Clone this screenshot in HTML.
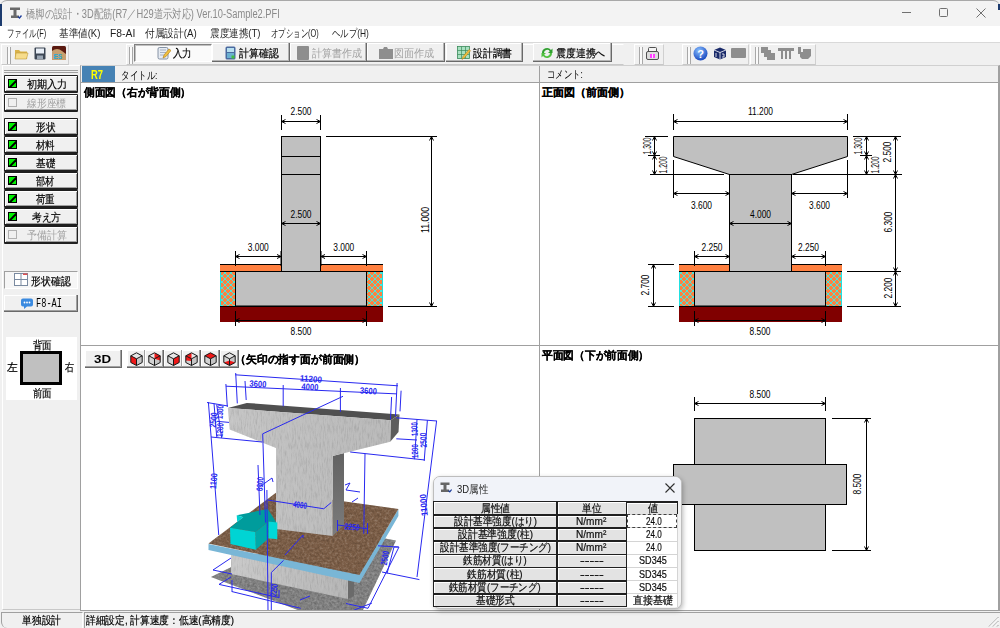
<!DOCTYPE html>
<html><head><meta charset="utf-8">
<style>
*{box-sizing:border-box;margin:0;padding:0}
html,body{width:1000px;height:628px;overflow:hidden;background:#f0f0f0;font-family:"Liberation Sans",sans-serif;font-size:12px;color:#000;position:relative}
.a{position:absolute}
.f{position:absolute;white-space:nowrap;line-height:1;display:inline-block;transform-origin:0 0;font-size:11px}
#title{left:0;top:0;width:1000px;height:26px;background:#f3f3f3;border-top:1px solid #a8a8a8;border-radius:7px 7px 0 0}
#menu{left:0;top:26px;width:1000px;height:16px;background:#fff}
#tb{left:0;top:42px;width:1000px;height:22px;background:#f0f0f0;border-top:1px solid #d9d9d9}
.grp{position:absolute;top:1px;height:21px;border-left:1px solid #fff;border-top:1px solid #fff;border-right:1px solid #d0d0d0;border-bottom:1px solid #c8c8c8}
.grip{position:absolute;top:2px;width:4px;height:17px;border-left:1px solid #a8a8a8;border-right:1px solid #a8a8a8;background:#fafafa}
.btn{position:absolute;top:1px;height:19px;background:#f0f0f0;border-right:1px solid #696969;border-bottom:1px solid #696969;box-shadow:inset -1px -1px 0 #b4b4b4, inset 1px 1px 0 #fff}
.lbtn{position:absolute;left:4px;width:74px;height:18px;background:#f0f0f0;border:1px solid #202020;border-bottom:2px solid #202020;box-shadow:inset 1px 1px 0 #fff, inset -1px -1px 0 #a0a0a0;border-radius:1px}
.ck{position:absolute;left:3px;top:3px;width:9px;height:9px;background:#00f000;border:1px solid #000;overflow:hidden}
.ck:after{content:"";position:absolute;left:-1px;top:3px;width:10px;height:1.5px;background:#000;transform:rotate(-45deg)}
.dis .ck{background:transparent;border-color:#b0b0b0}
.dis .ck:after{display:none}
.bt{color:#000}
.k{-webkit-text-stroke:0.2px #000}
</style></head><body>
<!-- title bar -->
<div id="title" class="a"></div>
<svg class="a" style="left:9px;top:7px" width="13" height="12" viewBox="0 0 13 12"><path d="M1 0.5h10v2.5H7.5v5.5h2.5v2.5H2v-2.5h2.5V3H1z" fill="#6a6a6a"/><path d="M9 9.5l1.5 1.5 2-2.5" stroke="#1a3a9a" fill="none" stroke-width="1.3"/></svg>
<span class="f" style="left:26.0px;top:8px;font-size:12px;color:#8a8a8a;--w:253.8px;--h:10px">橋脚の設計・3D配筋(R7／H29道示対応) Ver.10-Sample2.PFI</span>
<div class="a" style="left:902px;top:12px;width:9px;height:1px;background:#707070"></div>
<div class="a" style="left:939px;top:8px;width:9px;height:9px;border:1px solid #707070;border-radius:1.5px"></div>
<svg class="a" style="left:976px;top:8px" width="10" height="10" viewBox="0 0 10 10"><path d="M0.5 0.5l9 9M9.5 0.5l-9 9" stroke="#707070" stroke-width="1"/></svg>
<div class="a" style="left:0;top:4px;width:2px;height:22px;background:#1c3b6e"></div>
<div class="a" style="left:998px;top:4px;width:2px;height:6px;background:#1c3b6e"></div>
<!-- menu -->
<div id="menu" class="a"></div>
<span class="f" style="left:6.6px;top:28px;color:#1e1e1e;--w:39.2px">ファイル(F)</span>
<span class="f" style="left:58.6px;top:28px;color:#1e1e1e;--w:41.4px">基準値(K)</span>
<span class="f" style="left:109.7px;top:28px;color:#1e1e1e;--w:25.3px">F8-AI</span>
<span class="f" style="left:145.2px;top:28px;color:#1e1e1e;--w:51.8px">付属設計(A)</span>
<span class="f" style="left:209.8px;top:28px;color:#1e1e1e;--w:50.4px">震度連携(T)</span>
<span class="f" style="left:271.4px;top:28px;color:#1e1e1e;--w:47.8px">オプション(O)</span>
<span class="f" style="left:332.0px;top:28px;color:#1e1e1e;--w:36.8px">ヘルプ(H)</span>
<!-- toolbar -->
<div id="tb" class="a">
  <div class="grp" style="left:1px;width:68px"><div class="grip" style="left:5px"></div></div>
  <div class="grp" style="left:126px;width:498px;border-right-color:#f0f0f0"><div class="grip" style="left:2px"></div></div>
  <div class="grp" style="left:634px;width:30px"><div class="grip" style="left:4px"></div></div>
  <div class="grp" style="left:682px;width:67px"><div class="grip" style="left:4px"></div></div>
  <div class="grp" style="left:750px;width:66px"><div class="grip" style="left:4px"></div></div>
</div>
<!-- toolbar buttons -->
<svg class="a" style="left:14px;top:47px" width="15" height="13" viewBox="0 0 15 13"><path d="M1 3h4l1.5 1.5H13v7.5H1z" fill="#d9b24a"/><path d="M2 6h12l-1.5 6H1z" fill="#f6dc8c" stroke="#c09a3a" stroke-width="0.6"/></svg>
<svg class="a" style="left:34px;top:47px" width="12" height="13" viewBox="0 0 12 13"><rect x="0.5" y="0.5" width="11" height="12" rx="1" fill="#3c4654"/><rect x="2" y="1.5" width="8" height="5" fill="#e8eef6"/><rect x="3" y="8.5" width="6" height="3.5" fill="#9aa6b4"/></svg>
<svg class="a" style="left:52px;top:46px" width="14" height="14" viewBox="0 0 14 14"><rect width="14" height="14" rx="1.5" fill="#5a1a10"/><path d="M0 14V5q5-4 10 0l4 3v6z" fill="#c8a070"/><text x="1.5" y="12.5" font-size="6.5" font-weight="bold" fill="#20a8d8" font-family="Liberation Sans">ES</text></svg>
<div class="a" style="left:134px;top:44px;width:78px;height:18px;background:#fafafa;border-top:1px solid #808080;border-left:1px solid #808080;border-right:1px solid #fff;border-bottom:1px solid #fff;box-shadow:inset 1px 1px 0 #c0c0c0"></div>
<svg class="a" style="left:157px;top:46px" width="14" height="14" viewBox="0 0 14 14"><rect x="1" y="1.5" width="10" height="11.5" rx="1.5" fill="#e6ebf2" stroke="#6a7a90" stroke-width="0.8"/><path d="M3 4h6M3 6.5h6M3 9h4" stroke="#8a9ab0" stroke-width="0.7"/><path d="M6 12l1-3 5-6 2 1.5-5 6z" fill="#f0c040" stroke="#b07a10" stroke-width="0.6"/></svg>
<span class="f bt k" style="left:173.0px;top:48px;--w:18.9px">入力</span>
<div class="btn" style="left:212px;top:43px;width:78px;height:19px"></div>
<svg class="a" style="left:225px;top:46px" width="11" height="14" viewBox="0 0 11 14"><rect x="0.5" y="0.5" width="10" height="13" rx="1.5" fill="#4a6aa0"/><rect x="2" y="2" width="7" height="4" fill="#b8e0f0"/><rect x="2" y="7" width="7" height="5" fill="#6ab0d0"/><rect x="6.5" y="9.5" width="3" height="3" fill="#40c040"/></svg>
<span class="f bt k" style="left:239.4px;top:48px;--w:39.6px">計算確認</span>
<div class="btn" style="left:290px;top:43px;width:77px;height:19px"></div>
<div class="a" style="left:297px;top:46px;width:12px;height:14px;background:#8e8e8e;border-radius:1px"></div>
<span class="f" style="left:312.2px;top:48px;color:#a0a0a0;--w:50.0px">計算書作成</span>
<div class="btn" style="left:367px;top:43px;width:78px;height:19px"></div>
<svg class="a" style="left:379px;top:47px" width="14" height="12" viewBox="0 0 14 12"><path d="M0 2h4l1-2h3l1 2h5v10H0z" fill="#8e8e8e"/></svg>
<span class="f" style="left:393.9px;top:48px;color:#a0a0a0;--w:40.3px">図面作成</span>
<div class="btn" style="left:446px;top:43px;width:77px;height:19px"></div>
<svg class="a" style="left:457px;top:46px" width="14" height="14" viewBox="0 0 14 14"><rect x="0.5" y="0.5" width="12" height="12" fill="#a8e0c0" stroke="#3a8a5a" stroke-width="0.8"/><path d="M4.5 0.5v12M8.5 0.5v12M0.5 4.5h12M0.5 8.5h12" stroke="#3a8a5a" stroke-width="0.7"/><path d="M5 13.5l1-3 6-7 1.5 1.2-6 7z" fill="#f0c040" stroke="#b07a10" stroke-width="0.5"/></svg>
<span class="f bt k" style="left:473.0px;top:48px;--w:39.0px">設計調書</span>
<div class="btn" style="left:533px;top:43px;width:79px;height:19px"></div>
<svg class="a" style="left:540px;top:46px" width="14" height="14" viewBox="0 0 14 14"><path d="M2 7a5 5 0 0 1 9-3l1.5-1.5V7H8l1.8-1.8A3.2 3.2 0 0 0 4 7z" fill="#30a030"/><path d="M12 7a5 5 0 0 1-9 3l-1.5 1.5V7H6l-1.8 1.8A3.2 3.2 0 0 0 10 7z" fill="#50c040"/></svg>
<span class="f k" style="left:555.8px;top:48px;--w:49.2px">震度連携へ</span>
<svg class="a" style="left:646px;top:47px" width="13" height="13" viewBox="0 0 13 13"><rect x="2.5" y="0.5" width="8" height="5" rx="1" fill="#f4f4f4" stroke="#505050"/><rect x="0.5" y="4.5" width="12" height="8" rx="1.5" fill="#dcdcdc" stroke="#505050"/><rect x="4" y="7" width="5" height="4" fill="#ff40ff"/><path d="M6.5 7v4" stroke="#fff" stroke-width="0.8"/></svg>
<svg class="a" style="left:693px;top:46px" width="15" height="15" viewBox="0 0 15 15"><defs><radialGradient id="hg" cx="0.4" cy="0.3" r="0.7"><stop offset="0" stop-color="#8ac0ff"/><stop offset="1" stop-color="#1a4ac0"/></radialGradient></defs><circle cx="7.5" cy="7.5" r="7" fill="url(#hg)"/><text x="7.5" y="11.8" text-anchor="middle" font-size="11" font-weight="bold" fill="#fff" font-family="Liberation Sans">?</text></svg>
<svg class="a" style="left:713px;top:47px" width="14" height="13" viewBox="0 0 14 13"><path d="M1 3l6-2.5 6 2.5v7l-6 2.5-6-2.5z" fill="#1a2a6a"/><path d="M1 3l6 2.5 6-2.5M7 5.5v7" stroke="#fff" stroke-width="0.8" fill="none"/><path d="M3 6v4M9 7h2v3h-2" stroke="#fff" stroke-width="0.8" fill="none"/></svg>
<div class="a" style="left:731px;top:48px;width:15px;height:10px;background:#8e8e8e;border-radius:1px"></div>
<svg class="a" style="left:760px;top:47px" width="15" height="13" viewBox="0 0 15 13"><path d="M1 0h7v3h3v3h4v7H7v-3H4V6H1z" fill="#8e8e8e"/></svg>
<svg class="a" style="left:778px;top:48px" width="16" height="11" viewBox="0 0 16 11"><path d="M0 0h16v3h-3v8h-2V3H9v8H7V3H5v8H3V3H0z" fill="#8e8e8e"/></svg>
<svg class="a" style="left:797px;top:46px" width="15" height="14" viewBox="0 0 15 14"><path d="M1 1h3v5h2V3h8v7l-3 3H5L3 11V8H1z" fill="#8e8e8e"/></svg>
<!-- left panel -->
<div class="a" style="left:2px;top:65px;width:79px;height:545px;border-left:1px solid #fff;border-top:1px solid #fff;border-right:1px solid #c8c8c8;border-bottom:1px solid #c8c8c8"></div>
<div class="a" style="left:4px;top:70px;width:74px;height:1px;background:#a0a0a0"></div>
<div class="a" style="left:4px;top:72px;width:74px;height:1px;background:#a0a0a0"></div>
<div class="lbtn" style="top:75px"><div class="ck"></div></div>
<span class="f k" style="left:26.6px;top:79px;--w:40.6px">初期入力</span>
<div class="lbtn dis" style="top:94px"><div class="ck"></div></div>
<span class="f" style="left:26.9px;top:98px;color:#a0a0a0;--w:39.1px">線形座標</span>
<div class="lbtn" style="top:118px"><div class="ck"></div></div>
<span class="f k" style="left:36.4px;top:122px;--w:19.4px">形状</span>
<div class="lbtn" style="top:136px"><div class="ck"></div></div>
<span class="f k" style="left:36.4px;top:140px;--w:18.9px">材料</span>
<div class="lbtn" style="top:154px"><div class="ck"></div></div>
<span class="f k" style="left:36.4px;top:158px;--w:19.4px">基礎</span>
<div class="lbtn" style="top:172px"><div class="ck"></div></div>
<span class="f k" style="left:36.4px;top:176px;--w:18.4px">部材</span>
<div class="lbtn" style="top:190px"><div class="ck"></div></div>
<span class="f k" style="left:36.4px;top:194px;--w:18.9px">荷重</span>
<div class="lbtn" style="top:208px"><div class="ck"></div></div>
<span class="f k" style="left:31.8px;top:212px;--w:29.0px">考え方</span>
<div class="lbtn dis" style="top:226px"><div class="ck"></div></div>
<span class="f" style="left:26.9px;top:230px;color:#a0a0a0;--w:39.9px">予備計算</span>
<!-- left lower -->
<div class="a" style="left:4px;top:271px;width:74px;height:18px;background:#f6f6f6;border-top:1px solid #a0a0a0;border-left:1px solid #a0a0a0;border-right:1px solid #fff;border-bottom:1px solid #fff"></div>
<svg class="a" style="left:14px;top:273px" width="14" height="13" viewBox="0 0 14 13"><rect x="0.5" y="0.5" width="13" height="12" fill="#fff" stroke="#7a8aa0"/><path d="M7 0.5v12M0.5 6.5h13" stroke="#7a8aa0"/><rect x="9" y="0.5" width="4.5" height="1.5" fill="#e05050"/></svg>
<span class="f k" style="left:30.6px;top:276px;--w:39.8px">形状確認</span>
<div class="a" style="left:4px;top:295px;width:74px;height:17px;background:#f0f0f0;border-right:1px solid #696969;border-bottom:1px solid #696969;box-shadow:inset -1px -1px 0 #a0a0a0, inset 1px 1px 0 #fff"></div>
<svg class="a" style="left:21px;top:298px" width="12" height="11" viewBox="0 0 12 11"><path d="M2 0.5h8a2 2 0 0 1 2 2v4a2 2 0 0 1-2 2H6l-3 2.5V8.5H2a2 2 0 0 1-2-2v-4a2 2 0 0 1 2-2z" fill="#3a8ae0"/><circle cx="3.5" cy="4.5" r="0.9" fill="#fff"/><circle cx="6" cy="4.5" r="0.9" fill="#fff"/><circle cx="8.5" cy="4.5" r="0.9" fill="#fff"/></svg>
<span class="f" style="left:36.2px;top:298px;--w:26.0px;font-family:'Liberation Mono',monospace;font-size:12px">F8-AI</span>
<div class="a" style="left:6px;top:337px;width:71px;height:63px;background:#fff"></div>
<div class="a" style="left:20px;top:351px;width:42px;height:34px;background:#c0c0c0;border:3px solid #000"></div>
<span class="f k" style="left:32.6px;top:340px;--w:18.9px">背面</span>
<span class="f k" style="left:32.6px;top:388px;--w:18.9px">前面</span>
<span class="f k" style="left:7.4px;top:362px;--w:10.8px">左</span>
<span class="f k" style="left:65.0px;top:362px;--w:9.0px">右</span>
<!-- main frame -->
<div class="a" style="left:80px;top:65px;width:920px;height:546px;background:#fff;border-left:1px solid #a0a0a0;border-top:1px solid #d0d0d0;border-right:2px solid #a0a0a0;border-bottom:1px solid #a0a0a0"></div>
<div class="a" style="left:81px;top:66px;width:917px;height:17px;background:#f0f0f0;border-bottom:1px solid #a0a0a0"></div>
<div class="a" style="left:539px;top:66px;width:1px;height:545px;background:#a0a0a0"></div>
<div class="a" style="left:81px;top:345px;width:917px;height:1px;background:#a0a0a0"></div>
<div class="a" style="left:82px;top:66px;width:33px;height:16px;background:#4682b4"></div>
<span class="f" style="left:91px;top:69px;color:#ffff00;font-weight:bold;--w:12px;font-size:12px">R7</span>
<span class="f" style="left:120.5px;top:70px;--w:36.5px">タイトル:</span>
<span class="f" style="left:546.8px;top:69px;--w:35.7px">コメント:</span>
<span class="f k" style="left:84px;top:87px;font-weight:bold;--w:107px">側面図（右が背面側）</span>
<span class="f k" style="left:542px;top:87px;font-weight:bold;--w:88px">正面図（前面側）</span>
<span class="f k" style="left:542px;top:350px;font-weight:bold;--w:107px">平面図（下が前面側）</span>
<!--DRAW--><svg class="a" style="left:0;top:0" width="1000" height="628" viewBox="0 0 1000 628" font-family="Liberation Sans"><defs><pattern id="hx" patternUnits="userSpaceOnUse" width="6" height="6"><rect width="6" height="6" fill="#ff8040"/><path d="M-1 -1L7 7M7 -1L-1 7" stroke="#38f0e8" stroke-width="0.9"/></pattern></defs><rect x="220" y="264" width="163" height="7.2" fill="#ff8040"/><line x1="220" y1="264.5" x2="281" y2="264.5" stroke="#000" stroke-width="1"/><line x1="321" y1="264.5" x2="383" y2="264.5" stroke="#000" stroke-width="1"/><rect x="220" y="271.5" width="15.5" height="34.5" fill="url(#hx)"/><rect x="366.5" y="271.5" width="16.5" height="34.5" fill="url(#hx)"/><line x1="220.5" y1="271.5" x2="220.5" y2="306" stroke="#20e0e0" stroke-width="1"/><line x1="382.5" y1="271.5" x2="382.5" y2="306" stroke="#20e0e0" stroke-width="1"/><rect x="235.5" y="271.5" width="131.0" height="34.5" fill="#c0c0c0" stroke="#000" stroke-width="1"/><line x1="220" y1="271.5" x2="383" y2="271.5" stroke="#000" stroke-width="1"/><rect x="220" y="306" width="163" height="16" fill="#800000"/><line x1="220" y1="306.5" x2="383" y2="306.5" stroke="#000" stroke-width="1"/><rect x="281.5" y="136.5" width="39" height="135" fill="#c0c0c0" stroke="#000" stroke-width="1"/><line x1="281" y1="156.5" x2="321" y2="156.5" stroke="#000" stroke-width="1"/><line x1="281" y1="174.5" x2="321" y2="174.5" stroke="#000" stroke-width="1"/><line x1="281.5" y1="121.5" x2="320.5" y2="121.5" stroke="#000" stroke-width="1"/><line x1="281.5" y1="115" x2="281.5" y2="130" stroke="#000" stroke-width="1"/><line x1="320.5" y1="115" x2="320.5" y2="130" stroke="#000" stroke-width="1"/><path d="M285.5 119.5L281.5 121.5L285.5 123.5" stroke="#000" fill="none" stroke-width="1"/><path d="M316.5 119.5L320.5 121.5L316.5 123.5" stroke="#000" fill="none" stroke-width="1"/><text x="301.0" y="114.5" font-size="11.5" fill="#000" text-anchor="middle" textLength="21" lengthAdjust="spacingAndGlyphs">2.500</text><line x1="281.5" y1="223.5" x2="320.5" y2="223.5" stroke="#000" stroke-width="1"/><path d="M285.5 221.5L281.5 223.5L285.5 225.5" stroke="#000" fill="none" stroke-width="1"/><path d="M316.5 221.5L320.5 223.5L316.5 225.5" stroke="#000" fill="none" stroke-width="1"/><text x="301.0" y="217.5" font-size="11.5" fill="#000" text-anchor="middle" textLength="21" lengthAdjust="spacingAndGlyphs">2.500</text><line x1="235.5" y1="256.5" x2="281" y2="256.5" stroke="#000" stroke-width="1"/><line x1="235.5" y1="251" x2="235.5" y2="266" stroke="#000" stroke-width="1"/><line x1="281" y1="251" x2="281" y2="266" stroke="#000" stroke-width="1"/><path d="M239.5 254.5L235.5 256.5L239.5 258.5" stroke="#000" fill="none" stroke-width="1"/><path d="M277 254.5L281 256.5L277 258.5" stroke="#000" fill="none" stroke-width="1"/><text x="258.25" y="250.5" font-size="11.5" fill="#000" text-anchor="middle" textLength="21" lengthAdjust="spacingAndGlyphs">3.000</text><line x1="321" y1="256.5" x2="366.5" y2="256.5" stroke="#000" stroke-width="1"/><line x1="321" y1="251" x2="321" y2="266" stroke="#000" stroke-width="1"/><line x1="366.5" y1="251" x2="366.5" y2="266" stroke="#000" stroke-width="1"/><path d="M325 254.5L321 256.5L325 258.5" stroke="#000" fill="none" stroke-width="1"/><path d="M362.5 254.5L366.5 256.5L362.5 258.5" stroke="#000" fill="none" stroke-width="1"/><text x="343.75" y="250.5" font-size="11.5" fill="#000" text-anchor="middle" textLength="21" lengthAdjust="spacingAndGlyphs">3.000</text><line x1="235.5" y1="320.5" x2="366.5" y2="320.5" stroke="#000" stroke-width="1"/><line x1="235.5" y1="311" x2="235.5" y2="326" stroke="#000" stroke-width="1"/><line x1="366.5" y1="311" x2="366.5" y2="326" stroke="#000" stroke-width="1"/><path d="M239.5 318.5L235.5 320.5L239.5 322.5" stroke="#000" fill="none" stroke-width="1"/><path d="M362.5 318.5L366.5 320.5L362.5 322.5" stroke="#000" fill="none" stroke-width="1"/><text x="301.0" y="334.5" font-size="11.5" fill="#000" text-anchor="middle" textLength="21" lengthAdjust="spacingAndGlyphs">8.500</text><line x1="326" y1="136.5" x2="437" y2="136.5" stroke="#000" stroke-width="1"/><line x1="388" y1="306.5" x2="437" y2="306.5" stroke="#000" stroke-width="1"/><line x1="431.5" y1="136.5" x2="431.5" y2="306.5" stroke="#000" stroke-width="1"/><path d="M429.5 140.5L431.5 136.5L433.5 140.5" stroke="#000" fill="none" stroke-width="1"/><path d="M429.5 302.5L431.5 306.5L433.5 302.5" stroke="#000" fill="none" stroke-width="1"/><text transform="translate(424.5,220) rotate(-90)" x="0" y="4.2" font-size="11.5" text-anchor="middle" textLength="26" lengthAdjust="spacingAndGlyphs">11.000</text><rect x="679" y="264" width="163" height="7.2" fill="#ff8040"/><line x1="679" y1="264.5" x2="729" y2="264.5" stroke="#000" stroke-width="1"/><line x1="792" y1="264.5" x2="842" y2="264.5" stroke="#000" stroke-width="1"/><rect x="679" y="271.5" width="15.5" height="34.5" fill="url(#hx)"/><rect x="825.5" y="271.5" width="16.5" height="34.5" fill="url(#hx)"/><line x1="679.5" y1="271.5" x2="679.5" y2="306" stroke="#20e0e0" stroke-width="1"/><line x1="841.5" y1="271.5" x2="841.5" y2="306" stroke="#20e0e0" stroke-width="1"/><rect x="694.5" y="271.5" width="131.0" height="34.5" fill="#c0c0c0" stroke="#000" stroke-width="1"/><line x1="679" y1="271.5" x2="842" y2="271.5" stroke="#000" stroke-width="1"/><rect x="679" y="306" width="163" height="16" fill="#800000"/><line x1="679" y1="306.5" x2="842" y2="306.5" stroke="#000" stroke-width="1"/><path d="M673.5 136.5H847.5V156.5L791.5 174.5H729.5L673.5 156.5Z" fill="#c0c0c0" stroke="#000"/><rect x="729.5" y="174.5" width="62" height="97" fill="#c0c0c0" stroke="#000" stroke-width="1"/><line x1="673.5" y1="121.5" x2="847.5" y2="121.5" stroke="#000" stroke-width="1"/><line x1="673.5" y1="114" x2="673.5" y2="130" stroke="#000" stroke-width="1"/><line x1="847.5" y1="114" x2="847.5" y2="130" stroke="#000" stroke-width="1"/><path d="M677.5 119.5L673.5 121.5L677.5 123.5" stroke="#000" fill="none" stroke-width="1"/><path d="M843.5 119.5L847.5 121.5L843.5 123.5" stroke="#000" fill="none" stroke-width="1"/><text x="760.5" y="114.5" font-size="11.5" fill="#000" text-anchor="middle" textLength="25" lengthAdjust="spacingAndGlyphs">11.200</text><line x1="673.5" y1="193.5" x2="729.5" y2="193.5" stroke="#000" stroke-width="1"/><path d="M677.5 191.5L673.5 193.5L677.5 195.5" stroke="#000" fill="none" stroke-width="1"/><path d="M725.5 191.5L729.5 193.5L725.5 195.5" stroke="#000" fill="none" stroke-width="1"/><text x="701.5" y="208.5" font-size="11.5" fill="#000" text-anchor="middle" textLength="21" lengthAdjust="spacingAndGlyphs">3.600</text><line x1="673.5" y1="160" x2="673.5" y2="198" stroke="#000" stroke-width="1"/><line x1="791.5" y1="193.5" x2="847.5" y2="193.5" stroke="#000" stroke-width="1"/><path d="M795.5 191.5L791.5 193.5L795.5 195.5" stroke="#000" fill="none" stroke-width="1"/><path d="M843.5 191.5L847.5 193.5L843.5 195.5" stroke="#000" fill="none" stroke-width="1"/><text x="819.5" y="208.5" font-size="11.5" fill="#000" text-anchor="middle" textLength="21" lengthAdjust="spacingAndGlyphs">3.600</text><line x1="847.5" y1="160" x2="847.5" y2="198" stroke="#000" stroke-width="1"/><line x1="729.5" y1="223.5" x2="791.5" y2="223.5" stroke="#000" stroke-width="1"/><path d="M733.5 221.5L729.5 223.5L733.5 225.5" stroke="#000" fill="none" stroke-width="1"/><path d="M787.5 221.5L791.5 223.5L787.5 225.5" stroke="#000" fill="none" stroke-width="1"/><text x="760.5" y="217.5" font-size="11.5" fill="#000" text-anchor="middle" textLength="21" lengthAdjust="spacingAndGlyphs">4.000</text><line x1="694.5" y1="256.5" x2="729.5" y2="256.5" stroke="#000" stroke-width="1"/><line x1="694.5" y1="251" x2="694.5" y2="266" stroke="#000" stroke-width="1"/><line x1="729.5" y1="251" x2="729.5" y2="266" stroke="#000" stroke-width="1"/><path d="M698.5 254.5L694.5 256.5L698.5 258.5" stroke="#000" fill="none" stroke-width="1"/><path d="M725.5 254.5L729.5 256.5L725.5 258.5" stroke="#000" fill="none" stroke-width="1"/><text x="712.0" y="250.5" font-size="11.5" fill="#000" text-anchor="middle" textLength="21" lengthAdjust="spacingAndGlyphs">2.250</text><line x1="791.5" y1="256.5" x2="825.5" y2="256.5" stroke="#000" stroke-width="1"/><line x1="791.5" y1="251" x2="791.5" y2="266" stroke="#000" stroke-width="1"/><line x1="825.5" y1="251" x2="825.5" y2="266" stroke="#000" stroke-width="1"/><path d="M795.5 254.5L791.5 256.5L795.5 258.5" stroke="#000" fill="none" stroke-width="1"/><path d="M821.5 254.5L825.5 256.5L821.5 258.5" stroke="#000" fill="none" stroke-width="1"/><text x="808.5" y="250.5" font-size="11.5" fill="#000" text-anchor="middle" textLength="21" lengthAdjust="spacingAndGlyphs">2.250</text><line x1="694.5" y1="320.5" x2="825.5" y2="320.5" stroke="#000" stroke-width="1"/><line x1="694.5" y1="311" x2="694.5" y2="326" stroke="#000" stroke-width="1"/><line x1="825.5" y1="311" x2="825.5" y2="326" stroke="#000" stroke-width="1"/><path d="M698.5 318.5L694.5 320.5L698.5 322.5" stroke="#000" fill="none" stroke-width="1"/><path d="M821.5 318.5L825.5 320.5L821.5 322.5" stroke="#000" fill="none" stroke-width="1"/><text x="760.0" y="334.5" font-size="11.5" fill="#000" text-anchor="middle" textLength="21" lengthAdjust="spacingAndGlyphs">8.500</text><line x1="645" y1="136.5" x2="668" y2="136.5" stroke="#000" stroke-width="1"/><line x1="650" y1="174.5" x2="724" y2="174.5" stroke="#000" stroke-width="1"/><line x1="648" y1="155.5" x2="660" y2="155.5" stroke="#000" stroke-width="1"/><line x1="654.5" y1="136.5" x2="654.5" y2="155.5" stroke="#000" stroke-width="1"/><path d="M652.5 140.5L654.5 136.5L656.5 140.5" stroke="#000" fill="none" stroke-width="1"/><path d="M652.5 151.5L654.5 155.5L656.5 151.5" stroke="#000" fill="none" stroke-width="1"/><text transform="translate(647,146) rotate(-90)" x="0" y="4.2" font-size="11.5" text-anchor="middle" textLength="17" lengthAdjust="spacingAndGlyphs">1.300</text><line x1="654.5" y1="155.5" x2="654.5" y2="174.5" stroke="#000" stroke-width="1"/><path d="M652.5 159.5L654.5 155.5L656.5 159.5" stroke="#000" fill="none" stroke-width="1"/><path d="M652.5 170.5L654.5 174.5L656.5 170.5" stroke="#000" fill="none" stroke-width="1"/><text transform="translate(663,165) rotate(-90)" x="0" y="4.2" font-size="11.5" text-anchor="middle" textLength="17" lengthAdjust="spacingAndGlyphs">1.200</text><line x1="648" y1="264.5" x2="674" y2="264.5" stroke="#000" stroke-width="1"/><line x1="648" y1="306.5" x2="674" y2="306.5" stroke="#000" stroke-width="1"/><line x1="653.5" y1="264.5" x2="653.5" y2="306.5" stroke="#000" stroke-width="1"/><path d="M651.5 268.5L653.5 264.5L655.5 268.5" stroke="#000" fill="none" stroke-width="1"/><path d="M651.5 302.5L653.5 306.5L655.5 302.5" stroke="#000" fill="none" stroke-width="1"/><text transform="translate(645,285) rotate(-90)" x="0" y="4.2" font-size="11.5" text-anchor="middle" textLength="21" lengthAdjust="spacingAndGlyphs">2.700</text><line x1="853" y1="136.5" x2="901" y2="136.5" stroke="#000" stroke-width="1"/><line x1="793" y1="174.5" x2="902" y2="174.5" stroke="#000" stroke-width="1"/><line x1="860" y1="155.5" x2="872" y2="155.5" stroke="#000" stroke-width="1"/><line x1="866.5" y1="136.5" x2="866.5" y2="155.5" stroke="#000" stroke-width="1"/><path d="M864.5 140.5L866.5 136.5L868.5 140.5" stroke="#000" fill="none" stroke-width="1"/><path d="M864.5 151.5L866.5 155.5L868.5 151.5" stroke="#000" fill="none" stroke-width="1"/><text transform="translate(858,146) rotate(-90)" x="0" y="4.2" font-size="11.5" text-anchor="middle" textLength="17" lengthAdjust="spacingAndGlyphs">1.300</text><line x1="866.5" y1="155.5" x2="866.5" y2="174.5" stroke="#000" stroke-width="1"/><path d="M864.5 159.5L866.5 155.5L868.5 159.5" stroke="#000" fill="none" stroke-width="1"/><path d="M864.5 170.5L866.5 174.5L868.5 170.5" stroke="#000" fill="none" stroke-width="1"/><text transform="translate(875,165) rotate(-90)" x="0" y="4.2" font-size="11.5" text-anchor="middle" textLength="17" lengthAdjust="spacingAndGlyphs">1.200</text><line x1="895.5" y1="136.5" x2="895.5" y2="174.5" stroke="#000" stroke-width="1"/><path d="M893.5 140.5L895.5 136.5L897.5 140.5" stroke="#000" fill="none" stroke-width="1"/><path d="M893.5 170.5L895.5 174.5L897.5 170.5" stroke="#000" fill="none" stroke-width="1"/><text transform="translate(887,152) rotate(-90)" x="0" y="4.2" font-size="11.5" text-anchor="middle" textLength="21" lengthAdjust="spacingAndGlyphs">2.500</text><line x1="895.5" y1="174.5" x2="895.5" y2="271.5" stroke="#000" stroke-width="1"/><path d="M893.5 178.5L895.5 174.5L897.5 178.5" stroke="#000" fill="none" stroke-width="1"/><path d="M893.5 267.5L895.5 271.5L897.5 267.5" stroke="#000" fill="none" stroke-width="1"/><text transform="translate(888,222) rotate(-90)" x="0" y="4.2" font-size="11.5" text-anchor="middle" textLength="21" lengthAdjust="spacingAndGlyphs">6.300</text><line x1="895.5" y1="271.5" x2="895.5" y2="306.5" stroke="#000" stroke-width="1"/><path d="M893.5 275.5L895.5 271.5L897.5 275.5" stroke="#000" fill="none" stroke-width="1"/><path d="M893.5 302.5L895.5 306.5L897.5 302.5" stroke="#000" fill="none" stroke-width="1"/><text transform="translate(888,288) rotate(-90)" x="0" y="4.2" font-size="11.5" text-anchor="middle" textLength="21" lengthAdjust="spacingAndGlyphs">2.200</text><line x1="847" y1="271.5" x2="901" y2="271.5" stroke="#000" stroke-width="1"/><line x1="847" y1="306.5" x2="901" y2="306.5" stroke="#000" stroke-width="1"/><rect x="694.5" y="418.5" width="131" height="132" fill="#c0c0c0" stroke="#000" stroke-width="1"/><rect x="673.5" y="464.5" width="173" height="40" fill="#c0c0c0" stroke="#000" stroke-width="1"/><line x1="694.5" y1="418.5" x2="694.5" y2="464.5" stroke="#000" stroke-width="1"/><line x1="825.5" y1="418.5" x2="825.5" y2="464.5" stroke="#000" stroke-width="1"/><line x1="694.5" y1="403.5" x2="825.5" y2="403.5" stroke="#000" stroke-width="1"/><line x1="694.5" y1="397" x2="694.5" y2="411" stroke="#000" stroke-width="1"/><line x1="825.5" y1="397" x2="825.5" y2="411" stroke="#000" stroke-width="1"/><path d="M698.5 401.5L694.5 403.5L698.5 405.5" stroke="#000" fill="none" stroke-width="1"/><path d="M821.5 401.5L825.5 403.5L821.5 405.5" stroke="#000" fill="none" stroke-width="1"/><text x="760.0" y="397.5" font-size="11.5" fill="#000" text-anchor="middle" textLength="21" lengthAdjust="spacingAndGlyphs">8.500</text><line x1="832" y1="418.5" x2="871" y2="418.5" stroke="#000" stroke-width="1"/><line x1="832" y1="550.5" x2="871" y2="550.5" stroke="#000" stroke-width="1"/><line x1="866.5" y1="418.5" x2="866.5" y2="550.5" stroke="#000" stroke-width="1"/><path d="M864.5 422.5L866.5 418.5L868.5 422.5" stroke="#000" fill="none" stroke-width="1"/><path d="M864.5 546.5L866.5 550.5L868.5 546.5" stroke="#000" fill="none" stroke-width="1"/><text transform="translate(857,484) rotate(-90)" x="0" y="4.2" font-size="11.5" text-anchor="middle" textLength="21" lengthAdjust="spacingAndGlyphs">8.500</text></svg><!--/DRAW-->
<!--D3--><svg class="a" style="left:0;top:0" width="1000" height="628" viewBox="0 0 1000 628" font-family="Liberation Sans"><clipPath id="p3"><rect x="81" y="369" width="458" height="241"/></clipPath><g clip-path="url(#p3)"><defs>
<linearGradient id="cf" x1="0" y1="0" x2="1" y2="0"><stop offset="0" stop-color="#c4c4c4"/><stop offset="0.5" stop-color="#bdbdbd"/><stop offset="1" stop-color="#b8b8b8"/></linearGradient>
<linearGradient id="cs" x1="0" y1="0" x2="0" y2="1"><stop offset="0" stop-color="#626262"/><stop offset="1" stop-color="#7c7c7c"/></linearGradient>
<linearGradient id="ft" x1="0" y1="0" x2="1" y2="0"><stop offset="0" stop-color="#c8c8c8"/><stop offset="1" stop-color="#b4b4b4"/></linearGradient>
<filter id="nz" x="0" y="0" width="1" height="1" color-interpolation-filters="sRGB"><feTurbulence type="fractalNoise" baseFrequency="0.9" numOctaves="2" seed="3" result="t"/><feColorMatrix in="t" type="matrix" values="0 0 0 0 0  0 0 0 0 0  0 0 0 0 0  0 0 0 -0.9 0.55" result="a"/><feComposite in="a" in2="SourceGraphic" operator="in" result="b"/><feBlend in="SourceGraphic" in2="b" mode="multiply"/></filter>
<filter id="nz2" x="0" y="0" width="1" height="1" color-interpolation-filters="sRGB"><feTurbulence type="fractalNoise" baseFrequency="0.4" numOctaves="3" seed="7" result="t"/><feColorMatrix in="t" type="matrix" values="1 0 0 0 0  1 0 0 0 0  1 0 0 0 0  0 0 0 0 0.25" result="a"/><feComposite in="a" in2="SourceGraphic" operator="in" result="b"/><feBlend in="SourceGraphic" in2="b" mode="overlay"/></filter>
<filter id="nz3" x="0" y="0" width="1" height="1" color-interpolation-filters="sRGB"><feTurbulence type="fractalNoise" baseFrequency="0.8 0.12" numOctaves="3" seed="11" result="t"/><feColorMatrix in="t" type="matrix" values="1 0 0 0 0  1 0 0 0 0  1 0 0 0 0  0 0 0 0 0.12" result="a"/><feComposite in="a" in2="SourceGraphic" operator="in" result="b"/><feBlend in="SourceGraphic" in2="b" mode="overlay"/></filter>
</defs><polygon points="211,577 262,552 385,538.6 396,540.5 362,612 303,612" fill="#808080" filter="url(#nz2)"/><polygon points="231,549 348,575 348,599 231,574" fill="url(#ft)" filter="url(#nz3)"/><polygon points="348,575 354,572 354,596 348,599" fill="#6a6a6a" /><polygon points="208.5,544 208.5,550 359.4,583 398.4,516 398.4,509 359.4,575" fill="#79b6d6" /><polygon points="208.5,543.6 277,492 398.4,509 359.4,574.8" fill="#7b5d46" filter="url(#nz2)"/><polygon points="332.6,456 344,453 344,525 332.6,536" fill="url(#cs)" /><polygon points="227.9,408 246.8,402.9 399.5,414.6 390.8,420.2" fill="#505050" /><polygon points="390.8,420.2 399.5,414.6 398.5,432 390.2,441.7" fill="#5c5c5c" /><polygon points="227.9,408 390.8,420.2 390.2,441.7 332.6,456 332.6,536 276,529 276,448 229.7,429.4" fill="url(#cf)" filter="url(#nz3)"/><polygon points="230,527.7 255.3,532 268.7,521.5 276.4,522.4 267.8,509 236.7,515.3 243.4,517.2" fill="#009c9c" /><polygon points="255.3,532 268.7,521.5 268.7,538.2 255.8,549.7" fill="#00a8a8" /><polygon points="268.7,521.5 277.3,522.4 277.3,539.2 268.7,538.2" fill="#00d8d8" /><polygon points="236.7,515.3 243.4,517.2 237.2,522" fill="#00d0d0" /><polygon points="230,527.7 255.3,532 255.8,549.7 230.5,543.9" fill="#00d4d4" /><polyline points="235.2,374.8 398,385.8" fill="none" stroke="#2828f0" stroke-width="1"/><polyline points="225.9,386.2 397,393.9" fill="none" stroke="#2828f0" stroke-width="1"/><polyline points="235.7,373 237.3,403.4" fill="none" stroke="#2828f0" stroke-width="1"/><polyline points="245,381 246.2,400" fill="none" stroke="#2828f0" stroke-width="1"/><polyline points="225.9,384 227.3,406.8" fill="none" stroke="#2828f0" stroke-width="1"/><polyline points="283.2,385 283.2,406.3" fill="none" stroke="#2828f0" stroke-width="1"/><polyline points="340.4,388 340.4,411.8" fill="none" stroke="#2828f0" stroke-width="1"/><polyline points="391.6,397 390.5,419.4" fill="none" stroke="#2828f0" stroke-width="1"/><polyline points="397.1,383 395.5,416.2" fill="none" stroke="#2828f0" stroke-width="1"/><polyline points="401.1,390.7 400,411.4" fill="none" stroke="#2828f0" stroke-width="1"/><polyline points="343,396.3 262.7,433.8 265.5,522.5" fill="none" stroke="#2828f0" stroke-width="1"/><polyline points="207,402.5 228,406" fill="none" stroke="#2828f0" stroke-width="1"/><polyline points="208.4,402.3 218.75,535" fill="none" stroke="#2828f0" stroke-width="1"/><polyline points="214,403.4 216.7,436.9" fill="none" stroke="#2828f0" stroke-width="1"/><polyline points="216.7,404.6 221.7,438" fill="none" stroke="#2828f0" stroke-width="1"/><polyline points="216.7,421.3 229,422.4" fill="none" stroke="#2828f0" stroke-width="1"/><polyline points="211,437 262,442" fill="none" stroke="#2828f0" stroke-width="1"/><polyline points="396.3,417.8 437,421" fill="none" stroke="#2828f0" stroke-width="1"/><polyline points="396.3,438.8 417,440" fill="none" stroke="#2828f0" stroke-width="1"/><polyline points="350.2,452 425,460" fill="none" stroke="#2828f0" stroke-width="1"/><polyline points="417,419.4 414.6,459.2" fill="none" stroke="#2828f0" stroke-width="1"/><polyline points="427.4,420.2 424.2,460.8" fill="none" stroke="#2828f0" stroke-width="1"/><polyline points="436.6,421 417,577" fill="none" stroke="#2828f0" stroke-width="1"/><polyline points="258,465 260,515" fill="none" stroke="#2828f0" stroke-width="1"/><polyline points="258,488 272,478 273,482" fill="none" stroke="#2828f0" stroke-width="1"/><polyline points="267.5,500 323.75,508.75 331.25,502.5" fill="none" stroke="#2828f0" stroke-width="1"/><polyline points="365,453.75 363.75,533.75" fill="none" stroke="#2828f0" stroke-width="1"/><polyline points="345,485 350,483 346,490 360,492" fill="none" stroke="#2828f0" stroke-width="1"/><polyline points="352,502 358,498" fill="none" stroke="#2828f0" stroke-width="1"/><polyline points="337.5,525 367.5,528.75" fill="none" stroke="#2828f0" stroke-width="1"/><polyline points="337.5,520 337.5,531" fill="none" stroke="#2828f0" stroke-width="1"/><polyline points="367.5,523 367.5,534" fill="none" stroke="#2828f0" stroke-width="1"/><polyline points="266.9,490 268,611" fill="none" stroke="#2828f0" stroke-width="1"/><polyline points="271.3,572.5 283.6,560.3" fill="none" stroke="#2828f0" stroke-width="1"/><polyline points="271.3,572.5 271.3,611" fill="none" stroke="#2828f0" stroke-width="1"/><polyline points="285,555 303,535 303,538" fill="none" stroke="#2828f0" stroke-width="1"/><polyline points="213,570 231,558" fill="none" stroke="#2828f0" stroke-width="1"/><polyline points="213,570 232,574" fill="none" stroke="#2828f0" stroke-width="1"/><polyline points="219,584.4 231,577" fill="none" stroke="#2828f0" stroke-width="1"/><polyline points="219,584.4 279,597.6" fill="none" stroke="#2828f0" stroke-width="1"/><polyline points="232,591.6 300.7,608.3" fill="none" stroke="#2828f0" stroke-width="1"/><polyline points="232,580 232,592" fill="none" stroke="#2828f0" stroke-width="1"/><polyline points="279,590 279,598" fill="none" stroke="#2828f0" stroke-width="1"/><polyline points="300,600 310,596" fill="none" stroke="#2828f0" stroke-width="1"/><polyline points="346,603.5 368,608.3 399,547 394,547" fill="none" stroke="#2828f0" stroke-width="1"/><polyline points="394,547 387,573.6" fill="none" stroke="#2828f0" stroke-width="1"/><polyline points="382,572 419.4,579.6" fill="none" stroke="#2828f0" stroke-width="1"/><polyline points="378,545.8 398.4,547" fill="none" stroke="#2828f0" stroke-width="1"/><polyline points="352,611 372,603" fill="none" stroke="#2828f0" stroke-width="1"/><text transform="translate(311,379) rotate(3.9)" x="0" y="3" font-size="9" font-weight="bold" fill="#2828f0" text-anchor="middle" textLength="22" lengthAdjust="spacingAndGlyphs">11200</text><text transform="translate(258,384) rotate(3)" x="0" y="3" font-size="9" font-weight="bold" fill="#2828f0" text-anchor="middle" textLength="17" lengthAdjust="spacingAndGlyphs">3600</text><text transform="translate(310,387) rotate(3)" x="0" y="3" font-size="9" font-weight="bold" fill="#2828f0" text-anchor="middle" textLength="17" lengthAdjust="spacingAndGlyphs">4000</text><text transform="translate(368.5,391) rotate(3)" x="0" y="3" font-size="9" font-weight="bold" fill="#2828f0" text-anchor="middle" textLength="17" lengthAdjust="spacingAndGlyphs">3600</text><text transform="translate(213.4,420) rotate(-85)" x="0" y="3" font-size="9" font-weight="bold" fill="#2828f0" text-anchor="middle" textLength="15" lengthAdjust="spacingAndGlyphs">2500</text><text transform="translate(220,412) rotate(-85)" x="0" y="3" font-size="9" font-weight="bold" fill="#2828f0" text-anchor="middle" textLength="14" lengthAdjust="spacingAndGlyphs">1300</text><text transform="translate(220,430) rotate(-85)" x="0" y="3" font-size="9" font-weight="bold" fill="#2828f0" text-anchor="middle" textLength="14" lengthAdjust="spacingAndGlyphs">1200</text><text transform="translate(414.6,429) rotate(-92)" x="0" y="3" font-size="9" font-weight="bold" fill="#2828f0" text-anchor="middle" textLength="14" lengthAdjust="spacingAndGlyphs">1300</text><text transform="translate(415,451) rotate(-92)" x="0" y="3" font-size="9" font-weight="bold" fill="#2828f0" text-anchor="middle" textLength="14" lengthAdjust="spacingAndGlyphs">1200</text><text transform="translate(423.4,440) rotate(-92)" x="0" y="3" font-size="9" font-weight="bold" fill="#2828f0" text-anchor="middle" textLength="15" lengthAdjust="spacingAndGlyphs">2500</text><text transform="translate(423.75,505) rotate(-95)" x="0" y="3" font-size="9" font-weight="bold" fill="#2828f0" text-anchor="middle" textLength="22" lengthAdjust="spacingAndGlyphs">11000</text><text transform="translate(213.7,481) rotate(-85)" x="0" y="3" font-size="9" font-weight="bold" fill="#2828f0" text-anchor="middle" textLength="16" lengthAdjust="spacingAndGlyphs">1100</text><text transform="translate(260,484) rotate(-85)" x="0" y="3" font-size="9" font-weight="bold" fill="#2828f0" text-anchor="middle" textLength="14" lengthAdjust="spacingAndGlyphs">6300</text><text transform="translate(300,505) rotate(8)" x="0" y="3" font-size="9" font-weight="bold" fill="#2828f0" text-anchor="middle" textLength="14" lengthAdjust="spacingAndGlyphs">4000</text><text transform="translate(352,527) rotate(6)" x="0" y="3" font-size="9" font-weight="bold" fill="#2828f0" text-anchor="middle" textLength="15" lengthAdjust="spacingAndGlyphs">2250</text><text transform="translate(385,558) rotate(-80)" x="0" y="3" font-size="9" font-weight="bold" fill="#2828f0" text-anchor="middle" textLength="14" lengthAdjust="spacingAndGlyphs">2500</text><text transform="translate(274,590) rotate(-80)" x="0" y="3" font-size="9" font-weight="bold" fill="#2828f0" text-anchor="middle" textLength="12" lengthAdjust="spacingAndGlyphs">2250</text></g></svg><!--/D3-->
<!--UI--><div class="a" style="left:85px;top:350px;width:37px;height:18px;background:#f0f0f0;border-right:1px solid #696969;border-bottom:1px solid #696969;box-shadow:inset -1px -1px 0 #a0a0a0, inset 1px 1px 0 #fff"></div><span class="f" style="left:94.3px;top:354px;font-weight:bold;font-size:11px;--w:17px">3D</span><div class="a" style="left:126.5px;top:350px;width:19px;height:18px;background:#f0f0f0;border-right:1px solid #696969;border-bottom:1px solid #696969;box-shadow:inset -1px -1px 0 #a0a0a0, inset 1px 1px 0 #fff"></div><svg class="a" style="left:129.5px;top:352px" width="13" height="14" viewBox="0 0 13 14"><path d="M6.5 0.8 L12.2 3.8 L6.5 6.8 L0.8 3.8Z" fill="#e6e6e6"/><path d="M0.8 3.8 L6.5 6.8 L6.5 13.5 L0.8 10.5Z" fill="#d2d2d2"/><path d="M6.5 6.8 L12.2 3.8 L12.2 10.5 L6.5 13.5Z" fill="#c6c6c6"/><path d="M0.8 3.8 L6.5 6.8 L6.5 13.5 L0.8 10.5Z" fill="#f01818"/><path d="M6.5 0.8L12.2 3.8L12.2 10.5L6.5 13.5L0.8 10.5L0.8 3.8Z M0.8 3.8L6.5 6.8L12.2 3.8M6.5 6.8L6.5 13.5" fill="none" stroke="#1a1a1a" stroke-width="1" stroke-linejoin="round"/></svg><div class="a" style="left:144.5px;top:350px;width:19px;height:18px;background:#f0f0f0;border-right:1px solid #696969;border-bottom:1px solid #696969;box-shadow:inset -1px -1px 0 #a0a0a0, inset 1px 1px 0 #fff"></div><svg class="a" style="left:147.5px;top:352px" width="13" height="14" viewBox="0 0 13 14"><path d="M6.5 0.8 L12.2 3.8 L6.5 6.8 L0.8 3.8Z" fill="#e6e6e6"/><path d="M0.8 3.8 L6.5 6.8 L6.5 13.5 L0.8 10.5Z" fill="#d2d2d2"/><path d="M6.5 6.8 L12.2 3.8 L12.2 10.5 L6.5 13.5Z" fill="#c6c6c6"/><path d="M6.5 0.8 L12.2 3.8 L12.2 8.5 L6.5 6.8Z" fill="#f01818"/><path d="M6.5 0.8L12.2 3.8L12.2 10.5L6.5 13.5L0.8 10.5L0.8 3.8Z M0.8 3.8L6.5 6.8L12.2 3.8M6.5 6.8L6.5 13.5" fill="none" stroke="#1a1a1a" stroke-width="1" stroke-linejoin="round"/></svg><div class="a" style="left:163.5px;top:350px;width:19px;height:18px;background:#f0f0f0;border-right:1px solid #696969;border-bottom:1px solid #696969;box-shadow:inset -1px -1px 0 #a0a0a0, inset 1px 1px 0 #fff"></div><svg class="a" style="left:166.5px;top:352px" width="13" height="14" viewBox="0 0 13 14"><path d="M6.5 0.8 L12.2 3.8 L6.5 6.8 L0.8 3.8Z" fill="#e6e6e6"/><path d="M0.8 3.8 L6.5 6.8 L6.5 13.5 L0.8 10.5Z" fill="#d2d2d2"/><path d="M6.5 6.8 L12.2 3.8 L12.2 10.5 L6.5 13.5Z" fill="#c6c6c6"/><path d="M6.5 6.8 L12.2 3.8 L12.2 10.5 L6.5 13.5Z" fill="#f01818"/><path d="M6.5 0.8L12.2 3.8L12.2 10.5L6.5 13.5L0.8 10.5L0.8 3.8Z M0.8 3.8L6.5 6.8L12.2 3.8M6.5 6.8L6.5 13.5" fill="none" stroke="#1a1a1a" stroke-width="1" stroke-linejoin="round"/></svg><div class="a" style="left:182px;top:350px;width:19px;height:18px;background:#f0f0f0;border-right:1px solid #696969;border-bottom:1px solid #696969;box-shadow:inset -1px -1px 0 #a0a0a0, inset 1px 1px 0 #fff"></div><svg class="a" style="left:185px;top:352px" width="13" height="14" viewBox="0 0 13 14"><path d="M6.5 0.8 L12.2 3.8 L6.5 6.8 L0.8 3.8Z" fill="#e6e6e6"/><path d="M0.8 3.8 L6.5 6.8 L6.5 13.5 L0.8 10.5Z" fill="#d2d2d2"/><path d="M6.5 6.8 L12.2 3.8 L12.2 10.5 L6.5 13.5Z" fill="#c6c6c6"/><path d="M6.5 0.8 L6.5 6.8 L6.5 9 L0.8 8.5 L0.8 3.8Z" fill="#f01818"/><path d="M6.5 0.8L12.2 3.8L12.2 10.5L6.5 13.5L0.8 10.5L0.8 3.8Z M0.8 3.8L6.5 6.8L12.2 3.8M6.5 6.8L6.5 13.5" fill="none" stroke="#1a1a1a" stroke-width="1" stroke-linejoin="round"/></svg><div class="a" style="left:201px;top:350px;width:19px;height:18px;background:#f0f0f0;border-right:1px solid #696969;border-bottom:1px solid #696969;box-shadow:inset -1px -1px 0 #a0a0a0, inset 1px 1px 0 #fff"></div><svg class="a" style="left:204px;top:352px" width="13" height="14" viewBox="0 0 13 14"><path d="M6.5 0.8 L12.2 3.8 L6.5 6.8 L0.8 3.8Z" fill="#e6e6e6"/><path d="M0.8 3.8 L6.5 6.8 L6.5 13.5 L0.8 10.5Z" fill="#d2d2d2"/><path d="M6.5 6.8 L12.2 3.8 L12.2 10.5 L6.5 13.5Z" fill="#c6c6c6"/><path d="M6.5 0.8 L12.2 3.8 L6.5 6.8 L0.8 3.8Z" fill="#f01818"/><path d="M6.5 0.8L12.2 3.8L12.2 10.5L6.5 13.5L0.8 10.5L0.8 3.8Z M0.8 3.8L6.5 6.8L12.2 3.8M6.5 6.8L6.5 13.5" fill="none" stroke="#1a1a1a" stroke-width="1" stroke-linejoin="round"/></svg><div class="a" style="left:219.5px;top:350px;width:19px;height:18px;background:#f0f0f0;border-right:1px solid #696969;border-bottom:1px solid #696969;box-shadow:inset -1px -1px 0 #a0a0a0, inset 1px 1px 0 #fff"></div><svg class="a" style="left:222.5px;top:352px" width="13" height="14" viewBox="0 0 13 14"><path d="M6.5 0.8 L12.2 3.8 L6.5 6.8 L0.8 3.8Z" fill="#e6e6e6"/><path d="M0.8 3.8 L6.5 6.8 L6.5 13.5 L0.8 10.5Z" fill="#d2d2d2"/><path d="M6.5 6.8 L12.2 3.8 L12.2 10.5 L6.5 13.5Z" fill="#c6c6c6"/><path d="M0.8 10.5 L6.5 8.5 L12.2 10.5 L6.5 13.5Z" fill="#f01818"/><path d="M6.5 0.8L12.2 3.8L12.2 10.5L6.5 13.5L0.8 10.5L0.8 3.8Z M0.8 3.8L6.5 6.8L12.2 3.8M6.5 6.8L6.5 13.5" fill="none" stroke="#1a1a1a" stroke-width="1" stroke-linejoin="round"/></svg><span class="f k" style="left:235px;top:354px;font-weight:bold;--w:130px">（矢印の指す面が前面側）</span><div class="a" style="left:433px;top:476px;width:249px;height:133px;background:#f3f3f3;border:1px solid #bdbdbd;border-radius:7px;box-shadow:1px 2px 5px rgba(0,0,0,0.28)"></div><div class="a" style="left:434px;top:477px;width:247px;height:24px;background:#f1f3f9;border-radius:6px 6px 0 0"></div><svg class="a" style="left:440px;top:482px" width="12" height="11" viewBox="0 0 12 11"><path d="M0.5 0.5h9v2.5H6.5v4.5h2.5v2.5H1v-2.5h2.5V3H0.5z" fill="#666"/><path d="M8.5 8.5l1.3 1.3 1.8-2.3" stroke="#1a3a9a" fill="none" stroke-width="1.2"/></svg><span class="f" style="left:457px;top:484px;color:#1a1a1a;--w:31px">3D属性</span><svg class="a" style="left:665px;top:483px" width="10" height="10" viewBox="0 0 10 10"><path d="M0.5 0.5l9 9M9.5 0.5l-9 9" stroke="#303030" stroke-width="1.1"/></svg><div class="a" style="left:433px;top:501px;width:245px;height:106px;background:#202020"></div><div class="a" style="left:627px;top:514px;width:51px;height:93px;background:#d4d4d4"></div><div class="a" style="left:434px;top:502.4px;width:122px;height:11.6px;background:#e3e3e3;border-top:1px solid #fff;border-left:1px solid #fff"></div><div class="a" style="left:558px;top:502.4px;width:68px;height:11.6px;background:#e3e3e3;border-top:1px solid #fff;border-left:1px solid #fff"></div><div class="a" style="left:627px;top:502.5px;width:50px;height:11.2px;background:#e3e3e3;border-top:1px solid #fff;border-left:1px solid #fff"></div><span class="f k" style="left:480.5px;top:502.5px;color:#111;--w:29.0px">属性値</span><span class="f k" style="left:581.8px;top:502.5px;color:#111;--w:19.4px">単位</span><span class="f k" style="left:647.6px;top:502.5px;color:#111;--w:9.9px">値</span><div class="a" style="left:434px;top:515.6px;width:122px;height:11.6px;background:#e3e3e3;border-top:1px solid #fff;border-left:1px solid #fff"></div><div class="a" style="left:558px;top:515.6px;width:68px;height:11.6px;background:#e3e3e3;border-top:1px solid #fff;border-left:1px solid #fff"></div><div class="a" style="left:627px;top:515.2px;width:50px;height:12.2px;background:#fff;"></div><span class="f k" style="left:453.6px;top:515.7px;color:#111;--w:83.0px">設計基準強度(はり)</span><span class="f k" style="left:575.7px;top:515.7px;color:#111;--w:30.3px">N/mm²</span><span class="f k" style="left:645.5px;top:515.7px;color:#111;--w:15.8px">24.0</span><div class="a" style="left:434px;top:528.8px;width:122px;height:11.6px;background:#e3e3e3;border-top:1px solid #fff;border-left:1px solid #fff"></div><div class="a" style="left:558px;top:528.8px;width:68px;height:11.6px;background:#e3e3e3;border-top:1px solid #fff;border-left:1px solid #fff"></div><div class="a" style="left:627px;top:528.4px;width:50px;height:12.2px;background:#fff;"></div><span class="f k" style="left:458.0px;top:528.9px;color:#111;--w:75.1px">設計基準強度(柱)</span><span class="f k" style="left:575.7px;top:528.9px;color:#111;--w:30.3px">N/mm²</span><span class="f k" style="left:645.5px;top:528.9px;color:#111;--w:15.8px">24.0</span><div class="a" style="left:434px;top:542.0px;width:122px;height:11.6px;background:#e3e3e3;border-top:1px solid #fff;border-left:1px solid #fff"></div><div class="a" style="left:558px;top:542.0px;width:68px;height:11.6px;background:#e3e3e3;border-top:1px solid #fff;border-left:1px solid #fff"></div><div class="a" style="left:627px;top:541.6px;width:50px;height:12.2px;background:#fff;"></div><span class="f k" style="left:440.0px;top:542.1px;color:#111;--w:111.0px">設計基準強度(フーチング)</span><span class="f k" style="left:575.7px;top:542.1px;color:#111;--w:30.3px">N/mm²</span><span class="f k" style="left:645.5px;top:542.1px;color:#111;--w:15.8px">24.0</span><div class="a" style="left:434px;top:555.2px;width:122px;height:11.6px;background:#e3e3e3;border-top:1px solid #fff;border-left:1px solid #fff"></div><div class="a" style="left:558px;top:555.2px;width:68px;height:11.6px;background:#e3e3e3;border-top:1px solid #fff;border-left:1px solid #fff"></div><div class="a" style="left:627px;top:554.8px;width:50px;height:12.2px;background:#fff;"></div><span class="f k" style="left:462.5px;top:555.3px;color:#111;--w:63.6px">鉄筋材質(はり)</span><span class="f k" style="left:580.1px;top:555.3px;color:#111;--w:23.8px">-----</span><span class="f k" style="left:638.9px;top:555.3px;color:#111;--w:27.8px">SD345</span><div class="a" style="left:434px;top:568.4px;width:122px;height:11.6px;background:#e3e3e3;border-top:1px solid #fff;border-left:1px solid #fff"></div><div class="a" style="left:558px;top:568.4px;width:68px;height:11.6px;background:#e3e3e3;border-top:1px solid #fff;border-left:1px solid #fff"></div><div class="a" style="left:627px;top:568.0px;width:50px;height:12.2px;background:#fff;"></div><span class="f k" style="left:466.9px;top:568.5px;color:#111;--w:55.6px">鉄筋材質(柱)</span><span class="f k" style="left:580.1px;top:568.5px;color:#111;--w:23.8px">-----</span><span class="f k" style="left:638.9px;top:568.5px;color:#111;--w:27.8px">SD345</span><div class="a" style="left:434px;top:581.6px;width:122px;height:11.6px;background:#e3e3e3;border-top:1px solid #fff;border-left:1px solid #fff"></div><div class="a" style="left:558px;top:581.6px;width:68px;height:11.6px;background:#e3e3e3;border-top:1px solid #fff;border-left:1px solid #fff"></div><div class="a" style="left:627px;top:581.2px;width:50px;height:12.2px;background:#fff;"></div><span class="f k" style="left:449.4px;top:581.7px;color:#111;--w:91.6px">鉄筋材質(フーチング)</span><span class="f k" style="left:580.1px;top:581.7px;color:#111;--w:23.8px">-----</span><span class="f k" style="left:638.9px;top:581.7px;color:#111;--w:27.8px">SD345</span><div class="a" style="left:434px;top:594.8px;width:122px;height:11.6px;background:#e3e3e3;border-top:1px solid #fff;border-left:1px solid #fff"></div><div class="a" style="left:558px;top:594.8px;width:68px;height:11.6px;background:#e3e3e3;border-top:1px solid #fff;border-left:1px solid #fff"></div><div class="a" style="left:627px;top:594.4px;width:50px;height:12.2px;background:#fff;"></div><span class="f k" style="left:475.5px;top:594.9px;color:#111;--w:38.4px">基礎形式</span><span class="f k" style="left:580.1px;top:594.9px;color:#111;--w:23.8px">-----</span><span class="f k" style="left:633.3px;top:594.9px;color:#111;--w:40.2px">直接基礎</span><div class="a" style="left:627px;top:514px;width:50px;height:14px;border:1px dashed #404040"></div><!--/UI-->
<!-- status -->
<div class="a" style="left:1px;top:612px;width:82px;height:16px;border-top:1px solid #a0a0a0;border-left:1px solid #a0a0a0;border-right:1px solid #fff;border-bottom-left-radius:6px"></div>
<span class="f k" style="left:22.4px;top:615px;--w:39.0px">単独設計</span>
<div class="a" style="left:84px;top:612px;width:916px;height:16px;border-top:1px solid #a0a0a0;border-left:1px solid #a0a0a0"></div>
<span class="f k" style="left:86.4px;top:615px;--w:148.0px">詳細設定, 計算速度：低速(高精度)</span>

<svg class="a" style="left:986px;top:614px" width="13" height="13" viewBox="0 0 13 13"><path d="M12.5 3L3 12.5M12.5 7L7 12.5M12.5 11L11 12.5" stroke="#a0a0a0" stroke-width="1"/><path d="M12.5 4L4 12.5M12.5 8L8 12.5" stroke="#fff" stroke-width="1"/></svg>
<script>
document.querySelectorAll('.f').forEach(function(e){
  var w=parseFloat(e.style.getPropertyValue('--w'));
  var r=e.getBoundingClientRect().width;
  if(r>0&&w>0){e.style.transform='scaleX('+(w/r)+')';}
});
</script>
</body></html>
